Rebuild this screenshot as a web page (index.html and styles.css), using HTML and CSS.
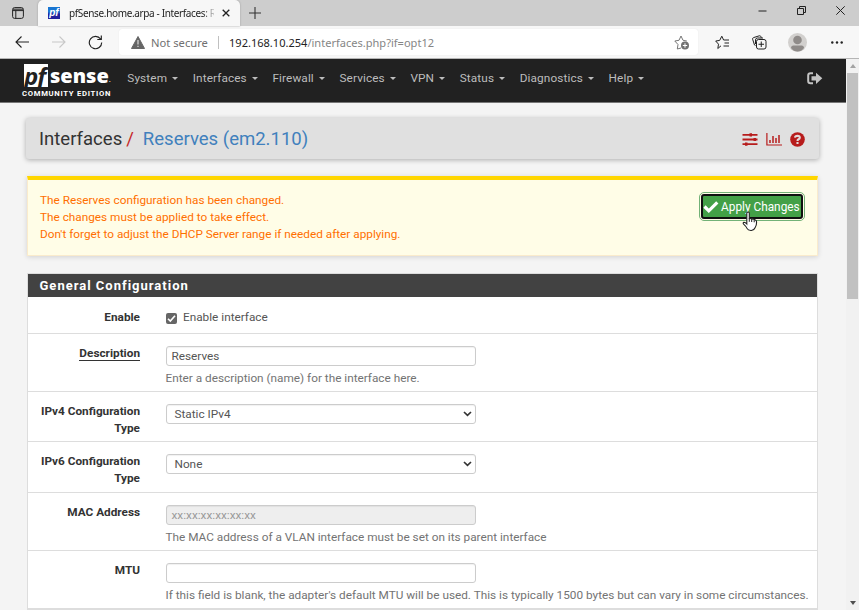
FILE: index.html
```html
<!DOCTYPE html>
<html lang="en">
<head>
<meta charset="utf-8">
<title>pfSense.home.arpa - Interfaces: Reserves (em2.110)</title>
<link rel="stylesheet" href="styles.css">
</head>
<body>
<div class="tabstrip">
  <svg class="tab-menu" width="12" height="12" viewBox="0 0 12 12" fill="none" stroke="#222"><rect x=".6" y=".6" width="10.8" height="10.8" rx="2"/><path d="M1 2.2h10M1 3.6h10M3.8 3.5v8"/></svg>
  <div class="tab">
    <span class="favicon"><i>pf</i></span>
    <span class="tab-title">pfSense.home.arpa - Interfaces: R</span>
    <svg class="tab-close" width="8" height="8" viewBox="0 0 8 8" stroke="#222" stroke-width="1.3"><path d="M.7.7l6.6 6.6M7.3.7L.7 7.3"/></svg>
  </div>
  <svg class="new-tab" width="12" height="12" viewBox="0 0 12 12" stroke="#333" stroke-width="1.1"><path d="M6 0v12M0 6h12"/></svg>
  <div class="window-buttons">
    <svg width="9" height="9" viewBox="0 0 9 9" stroke="#222"><path d="M.5 5h8"/></svg>
    <svg width="9" height="9" viewBox="0 0 9 9" fill="none" stroke="#222"><path d="M.5 2.5h6v6h-6zM2.5 2V.5h6v6H7"/></svg>
    <svg width="9" height="9" viewBox="0 0 9 9" stroke="#222"><path d="M.3.3l8.4 8.4M8.7.3L.3 8.7"/></svg>
  </div>
</div>
<div class="toolbar">
  <svg class="back" width="14" height="12" viewBox="0 0 14 12" fill="none" stroke="#222" stroke-width="1.1"><path d="M14 6H1M6.5.5L1 6l5.500 5.500"/></svg>
  <svg class="forward" width="14" height="12" viewBox="0 0 14 12" fill="none" stroke="#c8c8c8" stroke-width="1.100"><path d="M0 6h13M7.500.5L13 6l-5.500 5.500"/></svg>
  <svg class="reload" width="15" height="15" viewBox="0 0 15 15" fill="none" stroke="#222" stroke-width="1.150"><path d="M12.600 4A6.200 6.200 0 1 0 13.700 7.500M13.300.6V4.500H9.300"/></svg>
  <div class="address">
    <svg class="warn" width="14" height="13" viewBox="0 0 14 13"><path d="M7 .5L13.500 12.500H.5z" fill="#666" stroke="#666" stroke-linejoin="round"/><path d="M7 4v4.500M7 9.800v1.300" stroke="#ddd" stroke-width="1.200"/></svg>
    <span class="not-secure">Not secure</span>
    <span class="url"><b>192.168.10.254</b>/interfaces.php?if=opt12</span>
    <svg class="fav-add" width="16" height="15" viewBox="0 0 16 15" fill="none" stroke="#777"><path d="M7 13l-3.700 1 .7-4.500L.8 6l4.200-.7L7 1l2 4.300 3.800.7"/><circle cx="11" cy="10.500" r="4" fill="#707070" stroke="none"/><path d="M11 8.300v4.400M8.800 10.500h4.400" stroke="#fff"/></svg>
  </div>
  <svg class="favorites" width="15" height="15" viewBox="0 0 15 15" fill="none" stroke="#222"><path d="M6 10.800L2.800 13.500l.7-4.300L.7 6l4-.6L6.800 1.200 8.600 5H14M9.500 8H14M8.500 11H14"/></svg>
  <svg class="collections" width="15" height="15" viewBox="0 0 15 15" fill="none" stroke="#222"><path d="M3.500 10.500L2.500 10 .6 4.200Q.4 3 1.500 2.600L7.300.8Q8.600.5 9 1.800l.3 1M3.500 9V5Q3.500 3 5.500 3H11"/><rect x="4.500" y="4.500" width="9.500" height="9.500" rx="2" fill="#f7f7f7"/><path d="M9.250 6.500v5.500M6.500 9.250H12"/></svg>
  <svg class="profile" width="19" height="19" viewBox="0 0 19 19"><circle cx="9.500" cy="9.500" r="9.500" fill="#d2d0ce"/><circle cx="9.500" cy="7" r="4.300" fill="#8f8b89"/><path d="M3 15Q3 12.500 5.500 12.500h8Q16 12.500 16 15 13.500 18.500 9.500 18.500T3 15z" fill="#8f8b89"/></svg>
  <svg class="more" width="12" height="3" viewBox="0 0 12 3" fill="#222"><circle cx="1.300" cy="1.500" r="1.200"/><circle cx="6" cy="1.500" r="1.200"/><circle cx="10.700" cy="1.500" r="1.200"/></svg>
</div>
<div class="viewport">
  <div class="page">
    <nav class="navbar">
      <div class="logo">
        <div class="logo-name"><span class="logo-pf">pf</span><span class="logo-sense">sense</span><span class="logo-dot">.</span></div>
        <div class="logo-edition">COMMUNITY EDITION</div>
      </div>
      <ul class="menu">
        <li>System</li><li>Interfaces</li><li>Firewall</li><li>Services</li><li>VPN</li><li>Status</li><li>Diagnostics</li><li>Help</li>
      </ul>
      <svg class="logout" width="16" height="13" viewBox="0 0 16 13"><path d="M6 1.200H3.500Q1.200 1.200 1.200 3.500v5.500q0 2.300 2.300 2.300H6" fill="none" stroke="#c4c4c4" stroke-width="2"/><path d="M4.500 4.200H9V.8l6.300 5.500L9 12V8.500H4.500z" fill="#c4c4c4"/></svg>
    </nav>
    <header class="heading">
      <h1><span>Interfaces</span><em>/</em><a>Reserves (em2.110)</a></h1>
      <svg width="16" height="13" viewBox="0 0 16 13" fill="#b71c1c"><path d="M.5 1h15v1.800H.5zM.5 5.600h15v1.800H.5zM.5 10.200h15v1.800H.5z"/><path d="M7.500.3h2.500v3.200H7.500zM11.500 4.900H14v3.200h-2.500zM3 9.500h2.500v3.200H3z"/></svg>
      <svg width="16" height="13" viewBox="0 0 16 13" fill="none" stroke="#b71c1c"><path d="M.9 0v12H16" stroke-width="1.200"/><path d="M4 10V7M7 10V3M10 10V5M13 10V2" stroke-width="1.500"/></svg>
      <svg class="help" width="15" height="15" viewBox="0 0 15 15"><circle cx="7.500" cy="7.500" r="7.300" fill="#b71c1c"/><path d="M5 5.700Q5.200 3.800 7.500 3.800 9.800 3.900 9.800 5.700 9.800 6.700 8.500 7.300 7.500 7.800 7.500 8.900M7.500 10v1.900" fill="none" stroke="#e3dada" stroke-width="2.100"/></svg>
    </header>
    <section class="notice">
      <p>The Reserves configuration has been changed.<br>The changes must be applied to take effect.<br>Don't forget to adjust the DHCP Server range if needed after applying.</p>
      <button class="apply" type="button"><svg width="16" height="12" viewBox="0 0 16 12"><path d="M1.500 5.500l4.300 4.300L14.300 1.300" fill="none" stroke="#fff" stroke-width="3.200"/></svg>Apply Changes
        <svg class="cursor" width="16" height="21" viewBox="0 0 16 21"><path d="M5 1.500Q6.500.3 7.300 2v5.200l1.800.4 2 .5 1.900.6q1.600.5 1.600 2.300 0 3.500-1.400 5.500-.9 2.500-3.800 3-3.400.2-4.400-2.100-.9-2.100-3.400-4.300-1-1.200.3-1.900 1.300-.2 2.900 1.700V2z" fill="#fff" stroke="#222" stroke-width="1.100"/><path d="M7.300 7v3.800M9.700 8v3M12.200 8.700v2.600" stroke="#222"/></svg>
      </button>
    </section>
    <section class="panel">
      <h2>General Configuration</h2>
      <div class="row enable"><label>Enable</label><div class="check"><span class="box"><svg width="11" height="11" viewBox="0 0 11 11"><path d="M2 5.800l2.300 2.300L9 2.700" fill="none" stroke="#fff" stroke-width="1.600"/></svg></span>Enable interface</div></div>
      <div class="row"><label><u>Description</u></label><div><div class="field">Reserves</div><p>Enter a description (name) for the interface here.</p></div></div>
      <div class="row ip4"><label>IPv4 Configuration Type</label><div><div class="field select">Static IPv4<svg width="9" height="6" viewBox="0 0 9 6"><path d="M1 1l3.500 3.300L8 1" fill="none" stroke="#333" stroke-width="1.700"/></svg></div></div></div>
      <div class="row ip6"><label>IPv6 Configuration Type</label><div><div class="field select">None<svg width="9" height="6" viewBox="0 0 9 6"><path d="M1 1l3.500 3.300L8 1" fill="none" stroke="#333" stroke-width="1.700"/></svg></div></div></div>
      <div class="row"><label>MAC Address</label><div><div class="field disabled">xx:xx:xx:xx:xx:xx</div><p>The MAC address of a VLAN interface must be set on its parent interface</p></div></div>
      <div class="row"><label>MTU</label><div><div class="field"></div><p>If this field is blank, the adapter's default MTU will be used. This is typically 1500 bytes but can vary in some circumstances.</p></div></div>
    </section>
  </div>
  <div class="scrollbar"><span class="up"></span><span class="thumb"></span><span class="down"></span></div>
</div>
</body>
</html>
```
FILE: styles.css
```css
* { box-sizing: border-box; }
body { margin: 0; width: 859px; height: 610px; overflow: hidden; background: #f4f4f4; font: 11.790px/16.800px Roboto, sans-serif; }
svg { display: block; flex: none; }
h1, h2, p, ul { margin: 0; padding: 0; }
.tabstrip { height: 26px; background: #cdcdcd; display: flex; align-items: center; font: 11px "Noto Sans", sans-serif; }
.tab-menu { margin: 0 14px 0 12px; }
.tab { width: 202px; height: 26px; background: #f7f7f7; border-radius: 5px 5px 0 0; display: flex; align-items: center; padding-left: 10px; box-shadow: 0 0 2px #999; }
.favicon { width: 12px; height: 12px; background: linear-gradient(#1976d2 40%, #21209c 60%); color: #fff; font: bold 10px/11px "Liberation Sans", sans-serif; overflow: hidden; text-align: center; }
.tab-title { width: 145px; margin-left: 9px; white-space: nowrap; font-size: 10px; letter-spacing: -.36px; color: #222; -webkit-mask-image: linear-gradient(90deg, #000 92%, transparent 102%); mask-image: linear-gradient(90deg, #000 92%, transparent 102%); }
.tab-close { margin-left: 8px; }
.new-tab { margin-left: 9px; }
.window-buttons { margin-left: auto; display: flex; gap: 30px; padding-right: 14px; margin-top: -5px; }
.toolbar { height: 33px; background: #f7f7f7; border-bottom: 1px solid #b5b5b5; display: flex; align-items: center; font: 11.500px "Noto Sans", sans-serif; }
.back { margin-left: 15px; }
.forward { margin-left: 23px; }
.reload { margin-left: 22px; }
.address { margin-left: 16px; width: 579px; height: 26px; background: #fff; border-radius: 3px; display: flex; align-items: center; box-shadow: 0 0 1px #ddd; }
.warn { margin-left: 12px; }
.not-secure { margin-left: 6px; width: 68px; color: #707070; border-right: 1px solid #c0c0c0; white-space: nowrap; line-height: 13px; font-size: 11.200px; }
.url { margin-left: 10px; color: #858585; white-space: nowrap; font-size: 11.050px; }
.url b { font-weight: 400; color: #222; }
.fav-add { margin: 0 8px 0 auto; }
.favorites { margin-left: 17px; }
.collections { margin-left: 22px; }
.profile { margin-left: 21px; }
.more { margin-left: 24px; }
.viewport { height: 551px; display: flex; }
.page { width: 846px; height: 551px; overflow: hidden; }
.navbar { height: 44px; background: #212121; border-bottom: 1px solid #777; display: flex; color: #bdbdbd; }
.logo { width: 90px; margin-left: 22px; padding-top: 5px; color: #fff; }
.logo-name { display: flex; height: 25px; padding-left: 2px; }
.logo-pf { width: 24px; height: 23px; background: #fff; color: #212121; font: italic 700 24px/23px "Open Sans", sans-serif; letter-spacing: -1px; }
.logo-sense { font: 800 20px/24px "Open Sans", sans-serif; margin-left: 2px; }
.logo-dot { font: 8px/30px "Open Sans", sans-serif; }
.logo-edition { font: 700 7.700px/9px Roboto, sans-serif; letter-spacing: .7px; white-space: nowrap; }
.menu { list-style: none; display: flex; gap: 14.600px; margin: 11px 0 0 15.300px; }
.menu li { display: flex; align-items: center; height: 17px; letter-spacing: .12px; }
.menu li::after { content: ""; border: 3.400px solid transparent; border-top-color: #bdbdbd; border-bottom: 0; margin-left: 5px; }
.logout { margin: 13px 23px 0 auto; }
.heading { width: 793px; height: 41px; margin: 15px 0 0 26px; background: #e0e0e0; border-radius: 3px; box-shadow: 0 1px 5px rgba(0,0,0,.3); display: flex; align-items: center; padding: 2px 14px 0 13px; gap: 8px; }
.heading h1 { flex: 1; font: 400 18.550px/24px Roboto, sans-serif; color: #333; position: relative; top: -1px; }
.heading em { color: #c62828; font-style: normal; margin: 0 9px 0 4px; }
.heading a { color: #4080bd; }
.notice { width: 791px; height: 80px; margin: 17px 0 0 27px; border: 1px solid #faebcc; border-top: 4px solid #ffd600; background: #fffde7; box-shadow: 0 1px 5px rgba(0,0,0,.14); color: #ff6f00; display: flex; justify-content: space-between; padding: 12px 12px 0; }
.apply { position: relative; margin: 2px 2px 0 0; width: 102px; height: 25px; padding: 0; border: 2px solid #101010; border-radius: 3px; outline: 1px solid #73b277; outline-offset: 1px; background: #43a047; color: #fff; font: 11.850px Roboto, sans-serif; display: flex; align-items: center; gap: 2px; white-space: nowrap; }
.cursor { position: absolute; left: 39px; top: 15px; }
.panel { width: 791px; margin: 17px 0 0 27px; border: 1px solid #ddd; background: #fff; color: #555; }
.panel h2 { height: 23px; background: #424242; color: #fff; font: 700 13px/23px Roboto, sans-serif; letter-spacing: 1px; padding-left: 11.500px; }
.row { display: grid; grid-template-columns: 112px 1fr; column-gap: 25.500px; height: 58px; padding: 12px 0 0; border-bottom: 1px solid #ddd; }
.row label { text-align: right; font-weight: 700; color: #333; margin-top: -1px; }
.row u { text-decoration: none; border-bottom: 1px solid #333; }
.row p { margin-top: 4px; color: #737373; white-space: nowrap; }
.enable { height: 37px; }
.enable label { margin-top: 0; }
.ip4 { height: 50px; }
.ip6 { height: 51px; }
.check { display: flex; align-items: center; height: 17px; gap: 6.500px; }
.box { width: 11px; height: 11px; border-radius: 2px; background: #666; margin-top: 2px; }
.field { width: 310px; height: 20px; border: 1px solid #ccc; border-radius: 3px; padding: 0 5px; line-height: 19px; display: flex; justify-content: space-between; align-items: center; box-shadow: inset 0 1px 1px rgba(0,0,0,.06); }
.select { padding: 0 3px 0 8px; }
.disabled { background: #eee; color: #999; }
.scrollbar { width: 13px; background: #f1f1f1; display: flex; flex-direction: column; align-items: center; }
.up { border: 3.500px solid transparent; border-top: 0; border-bottom: 4px solid #a3a3a3; margin-top: 5px; }
.thumb { width: 11px; height: 226px; background: #c1c1c1; margin-top: 5px; }
.down { border: 3.500px solid transparent; border-bottom: 0; border-top: 4px solid #505050; margin: auto 0 5px; }
```
